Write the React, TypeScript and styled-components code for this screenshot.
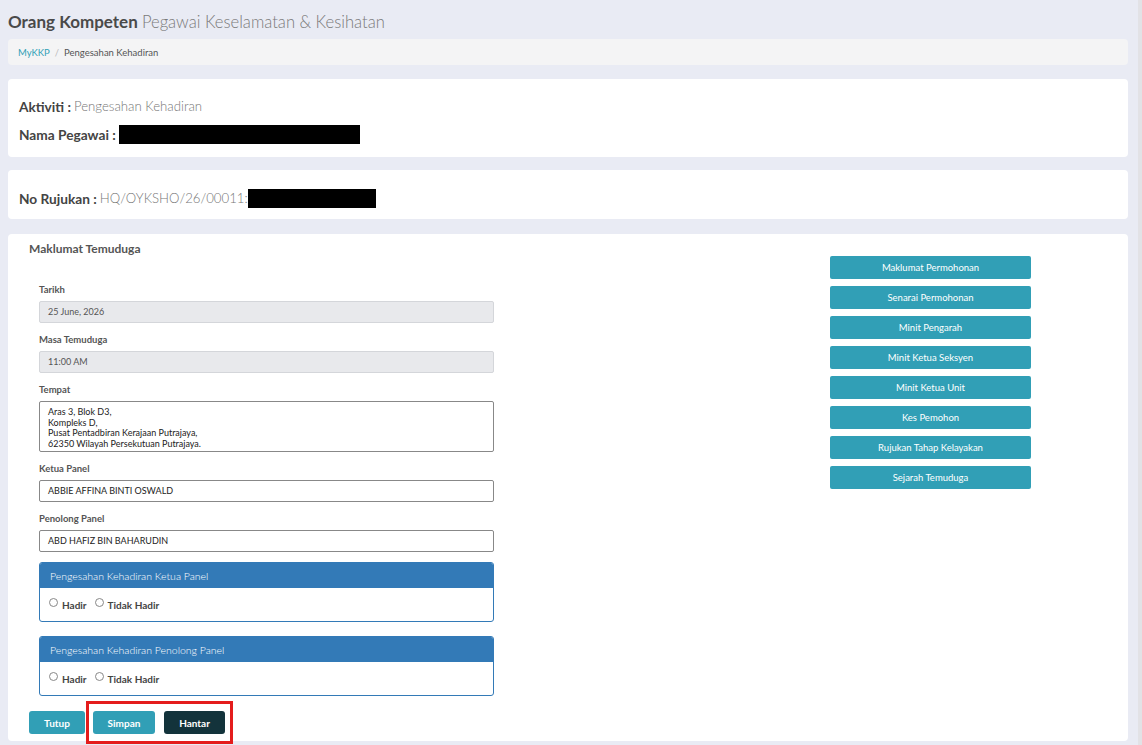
import React from 'react';
import styled, { createGlobalStyle } from 'styled-components';

const teal = '#319fb6';
const blue = '#337ab7';

const GlobalStyle = createGlobalStyle`
  html, body {
    margin: 0;
    padding: 0;
    background: #e9ebf4;
    font-family: Lato, 'Open Sans', Arial, sans-serif;
    color: #444;
  }
`;

const Shell = styled.div`
  display: flex;
  min-height: 745px;
`;

const Page = styled.div`
  flex: 1;
  padding: 10px 10px 0 8px;
`;

const ScrollTrack = styled.div`
  width: 4px;
  background: #e2e2e6;
`;

const PageTitle = styled.h1`
  margin: 0;
  font-size: 17px;
  line-height: 24px;
  font-weight: 700;
  color: #4a4a4a;

  span {
    font-size: 16.6px;
    font-weight: 300;
    color: #7a7a7a;
  }
`;

const Breadcrumb = styled.div`
  margin-top: 5px;
  height: 26px;
  display: flex;
  align-items: center;
  gap: 5px;
  padding: 0 10px;
  background: #f4f4f5;
  border-radius: 4px;
  font-size: 9.5px;
  color: #555;

  a {
    color: ${teal};
    text-decoration: none;
  }
`;

const Divider = styled.span`
  color: #bbb;
`;

const Card = styled.section<{ $pad: string; $gap: number }>`
  margin-top: ${({ $gap }) => $gap}px;
  background: #fff;
  border-radius: 4px;
  padding: ${({ $pad }) => $pad};
`;

const InfoLine = styled.div`
  display: flex;
  align-items: center;
  height: 20px;
  font-size: 14px;
  margin-bottom: 8px;

  &:last-child {
    margin-bottom: 0;
  }

  b {
    font-size: 13.7px;
    font-weight: 700;
    color: #444;
    margin-right: 3px;
  }
`;

const InfoValue = styled.span`
  font-size: 13.2px;
  font-weight: 300;
  color: #777;
`;

const Redacted = styled.span<{ $w: number }>`
  display: inline-block;
  width: ${({ $w }) => $w}px;
  height: 19px;
  background: #000;
`;

const Body = styled.div`
  display: flex;
  align-items: flex-start;
`;

const FormColumn = styled.div`
  width: 465px;
`;

const SectionTitle = styled.h2`
  margin: 0;
  font-size: 12px;
  line-height: 16px;
  font-weight: 700;
  color: #555;
`;

const Fields = styled.div`
  padding: 26px 0 0 10px;
`;

const Label = styled.div`
  font-size: 9.5px;
  font-weight: 700;
  line-height: 14px;
  color: #555;
  margin-bottom: 4px;
`;

const Field = styled.div<{ $readonly?: boolean; $tall?: boolean }>`
  box-sizing: border-box;
  height: ${({ $tall }) => ($tall ? 51 : 22)}px;
  margin-bottom: 10px;
  padding: ${({ $tall }) => ($tall ? '5px 8px' : '0 8px')};
  display: flex;
  flex-direction: column;
  justify-content: ${({ $tall }) => ($tall ? 'flex-start' : 'center')};
  border: 1px solid ${({ $readonly }) => ($readonly ? '#d4d6da' : '#888')};
  border-radius: 2px;
  background: ${({ $readonly }) => ($readonly ? '#e8e9ec' : '#fff')};
  font-size: 9px;
  line-height: 10.5px;
  color: ${({ $readonly }) => ($readonly ? '#555' : '#222')};
`;

const Panel = styled.div<{ $gap: number }>`
  margin-top: ${({ $gap }) => $gap}px;
  border: 1px solid ${blue};
  border-radius: 3px;
  overflow: hidden;
`;

const PanelHeading = styled.div`
  height: 25px;
  display: flex;
  align-items: center;
  padding: 0 10px;
  background: ${blue};
  color: #fff;
  font-size: 10.5px;
  font-weight: 300;
`;

const PanelBody = styled.div`
  height: 33px;
  display: flex;
  align-items: center;
  padding: 0 9px;
  gap: 8px;
`;

const RadioOption = styled.label`
  display: flex;
  align-items: center;
  gap: 4px;
  font-size: 10px;
  font-weight: 700;
  color: #444;
`;

const RadioDot = styled.span`
  width: 7px;
  height: 7px;
  border: 1px solid #888;
  border-radius: 50%;
  background: #fff;
  margin-top: -5px;
`;

const Actions = styled.div`
  display: flex;
  align-items: center;
  margin: 5px 0 -3px -10px;
`;

const Button = styled.button<{ $dark?: boolean; $w: number }>`
  width: ${({ $w }) => $w}px;
  height: 23px;
  border: none;
  border-radius: 3px;
  background: ${({ $dark }) => ($dark ? '#13333b' : teal)};
  color: #fff;
  font-family: inherit;
  font-size: 10px;
  font-weight: 700;
  cursor: pointer;
`;

const Highlight = styled.span`
  display: flex;
  gap: 9px;
  margin-left: 1px;
  padding: 7px 5px 7px 4px;
  border: 3px solid #e41c1c;
  background: #fff;
`;

const SideMenu = styled.nav`
  margin: 15px 0 0 336px;
  width: 201px;
  display: flex;
  flex-direction: column;
  gap: 7px;
`;

const MenuButton = styled.button`
  height: 23px;
  border: none;
  border-radius: 2px;
  background: ${teal};
  color: #fff;
  font-family: inherit;
  font-size: 9.5px;
  cursor: pointer;
`;

const menu = [
  'Maklumat Permohonan',
  'Senarai Permohonan',
  'Minit Pengarah',
  'Minit Ketua Seksyen',
  'Minit Ketua Unit',
  'Kes Pemohon',
  'Rujukan Tahap Kelayakan',
  'Sejarah Temuduga',
];

const Attendance = ({ title, gap }: { title: string; gap: number }) => (
  <Panel $gap={gap}>
    <PanelHeading>{title}</PanelHeading>
    <PanelBody>
      <RadioOption>
        <RadioDot />
        Hadir
      </RadioOption>
      <RadioOption>
        <RadioDot />
        Tidak Hadir
      </RadioOption>
    </PanelBody>
  </Panel>
);

export default function App() {
  return (
    <>
      <GlobalStyle />
      <Shell>
        <Page>
          <PageTitle>
            Orang Kompeten <span>Pegawai Keselamatan &amp; Kesihatan</span>
          </PageTitle>
          <Breadcrumb>
            <a href="#">MyKKP</a>
            <Divider>/</Divider>
            <span>Pengesahan Kehadiran</span>
          </Breadcrumb>

          <Card $gap={14} $pad="17px 11px 13px">
            <InfoLine>
              <b>Aktiviti :</b>
              <InfoValue>Pengesahan Kehadiran</InfoValue>
            </InfoLine>
            <InfoLine>
              <b>Nama Pegawai :</b>
              <Redacted $w={241} />
            </InfoLine>
          </Card>

          <Card $gap={13} $pad="18px 11px 11px">
            <InfoLine>
              <b>No Rujukan :</b>
              <InfoValue>HQ/OYKSHO/26/00011:</InfoValue>
              <Redacted $w={128} />
            </InfoLine>
          </Card>

          <Card $gap={15} $pad="7px 21px 0">
            <Body>
              <FormColumn>
                <SectionTitle>Maklumat Temuduga</SectionTitle>
                <Fields>
                  <Label>Tarikh</Label>
                  <Field $readonly>25 June, 2026</Field>
                  <Label>Masa Temuduga</Label>
                  <Field $readonly>11:00 AM</Field>
                  <Label>Tempat</Label>
                  <Field $tall>
                    <span>Aras 3, Blok D3,</span>
                    <span>Kompleks D,</span>
                    <span>Pusat Pentadbiran Kerajaan Putrajaya,</span>
                    <span>62350 Wilayah Persekutuan Putrajaya.</span>
                  </Field>
                  <Label>Ketua Panel</Label>
                  <Field>ABBIE AFFINA BINTI OSWALD</Field>
                  <Label>Penolong Panel</Label>
                  <Field>ABD HAFIZ BIN BAHARUDIN</Field>
                  <Attendance gap={0} title="Pengesahan Kehadiran Ketua Panel" />
                  <Attendance gap={14} title="Pengesahan Kehadiran Penolong Panel" />
                  <Actions>
                    <Button $w={56}>Tutup</Button>
                    <Highlight>
                      <Button $w={62}>Simpan</Button>
                      <Button $w={61} $dark>
                        Hantar
                      </Button>
                    </Highlight>
                  </Actions>
                </Fields>
              </FormColumn>
              <SideMenu>
                {menu.map((item) => (
                  <MenuButton key={item}>{item}</MenuButton>
                ))}
              </SideMenu>
            </Body>
          </Card>
        </Page>
        <ScrollTrack />
      </Shell>
    </>
  );
}
